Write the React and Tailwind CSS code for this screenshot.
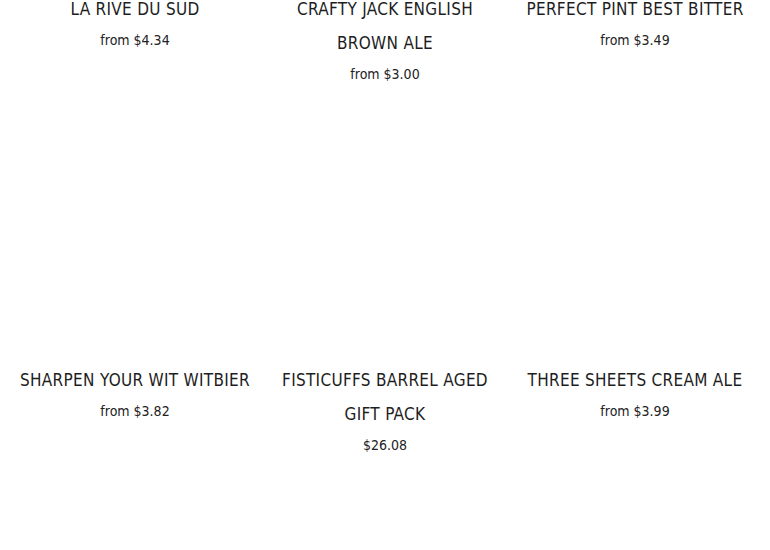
import React from "react";

const products = [
  { title: ["LA RIVE DU SUD"], price: "from $4.34" },
  { title: ["CRAFTY JACK ENGLISH", "BROWN ALE"], price: "from $3.00" },
  { title: ["PERFECT PINT BEST BITTER"], price: "from $3.49" },
  { title: ["SHARPEN YOUR WIT WITBIER"], price: "from $3.82" },
  { title: ["FISTICUFFS BARREL AGED", "GIFT PACK"], price: "$26.08" },
  { title: ["THREE SHEETS CREAM ALE"], price: "from $3.99" },
];

const ProductCard = ({ product }) => (
  <div className="flex flex-col items-center text-center">
    {/* image not loaded, stays blank */}
    <div className="w-full h-[245px] mb-[30px] bg-white" />
    <h3 className="text-[17px] leading-[34px] tracking-[0.3px] text-[#1e1e1e] font-normal whitespace-nowrap">
      {product.title.map((line, i) => (
        <span key={i} className="block">
          {line}
        </span>
      ))}
    </h3>
    <p className="text-[14px] leading-[28px] text-[#222]">{product.price}</p>
  </div>
);

export default function App() {
  return (
    <div className="w-[770px] h-[550px] overflow-hidden bg-white font-['DejaVu_Sans_Condensed','Liberation_Sans',sans-serif]">
      <div className="-mt-[283px] grid grid-cols-3 px-[10px]">
        {products.map((p, i) => (
          <ProductCard key={i} product={p} />
        ))}
      </div>
    </div>
  );
}
